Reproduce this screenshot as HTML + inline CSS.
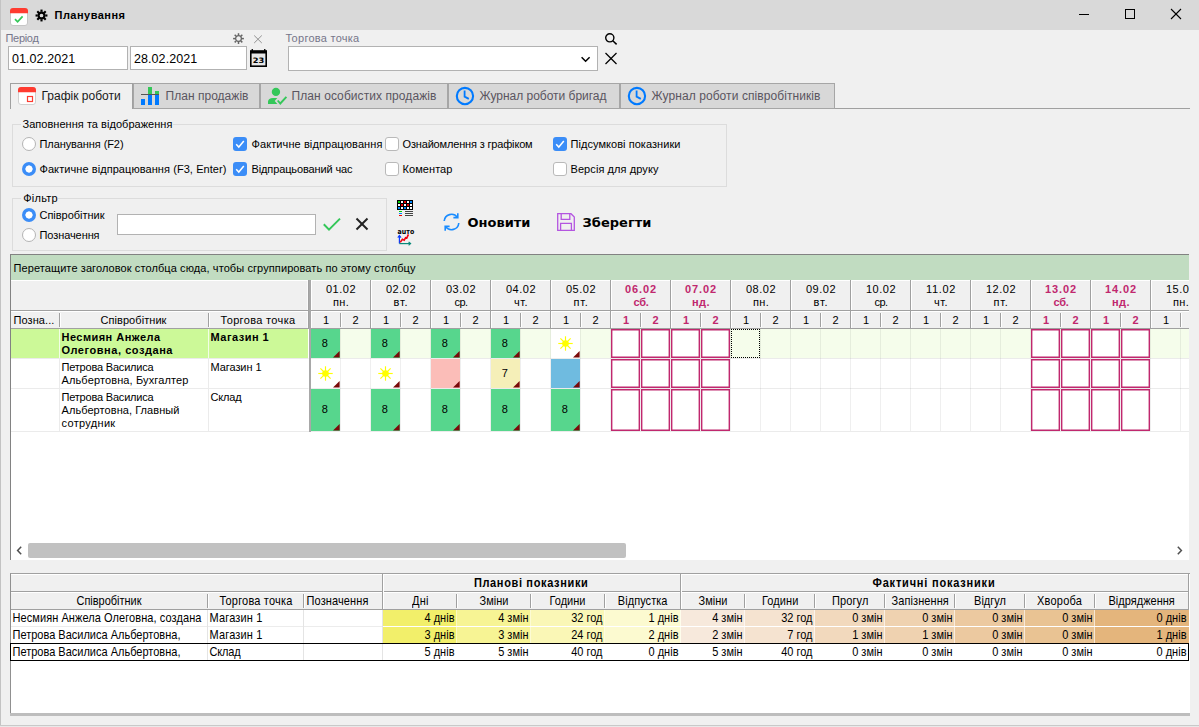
<!DOCTYPE html>
<html lang="uk"><head><meta charset="utf-8"><title>Планування</title>
<style>
html,body{margin:0;padding:0}
body{width:1199px;height:727px;overflow:hidden;position:relative;background:#f0f0f0;font-family:"Liberation Sans",sans-serif;font-size:11px;color:#000}
div,span.t,svg{position:absolute;box-sizing:border-box}
span.t{white-space:pre;display:block}
.inp{background:#fff;border:1px solid #b2b2b2}
.gb{border:1px solid #dcdcdc}
.tab{background:#d8d8d8;border:1px solid #a6a6a6}
.rad{border-radius:50%;background:#fff;border:1px solid #b4b4b4}
.rad.on{border:none;background:radial-gradient(circle at 50% 50%,#fff 0,#fff 3.3px,#3b8df7 3.9px,#3b8df7 100%)}
.cb{border-radius:3px;background:#fff;border:1px solid #b9b9b9}
.cb.on{background:#3b8df7;border:none}

</style></head>
<body>
<div style="left:0px;top:0px;width:1199px;height:30px;background:#d9d9d9"></div>
<div style="left:0px;top:0px;width:1px;height:727px;background:#c3c3c3"></div>
<svg style="left:9px;top:7px" width="20" height="20" viewBox="0 0 20 20">
<rect x="1.5" y="1.5" width="17" height="17" rx="2.5" fill="#fff" stroke="#c6c6c6" stroke-width="1"/>
<path d="M1 4 a3 3 0 0 1 3-3 h12 a3 3 0 0 1 3 3 v2.2 h-18z" fill="#ff3b30"/>
<path d="M6 12.2 l2.6 2.6 l5-5.4" fill="none" stroke="#34c759" stroke-width="1.7"/>
</svg>
<svg style="left:34.5px;top:9.2px" width="13" height="13" viewBox="0 0 14 14">
<g fill="none" stroke="#000" stroke-width="2.2"><circle cx="7" cy="7" r="3.1"/></g>
<g stroke="#000" stroke-width="2.3" stroke-linecap="butt">
<line x1="7" y1="0.6" x2="7" y2="3"/><line x1="7" y1="11" x2="7" y2="13.4"/>
<line x1="0.6" y1="7" x2="3" y2="7"/><line x1="11" y1="7" x2="13.4" y2="7"/>
<line x1="2.5" y1="2.5" x2="4.2" y2="4.2"/><line x1="9.8" y1="9.8" x2="11.5" y2="11.5"/>
<line x1="2.5" y1="11.5" x2="4.2" y2="9.8"/><line x1="9.8" y1="4.2" x2="11.5" y2="2.5"/>
</g></svg>
<span class="t" style="left:54.50px;top:8.84px;font:bold 11px/13px 'Liberation Sans',sans-serif;color:#000;letter-spacing:0.478px;">Планування</span>
<svg style="left:1070px;top:0px" width="129" height="30" viewBox="0 0 129 30">
<g stroke="#000" stroke-width="1" fill="none" shape-rendering="crispEdges">
<line x1="9" y1="14.5" x2="19" y2="14.5"/>
<rect x="55.5" y="9.5" width="9" height="9"/>
</g>
<g stroke="#000" stroke-width="1.1" fill="none">
<line x1="101" y1="9" x2="111" y2="19"/><line x1="111" y1="9" x2="101" y2="19"/>
</g></svg>
<span class="t" style="left:5.50px;top:31.84px;font:normal 11px/13px 'Liberation Sans',sans-serif;color:#76768a;letter-spacing:-0.315px;">Період</span>
<div class="inp" style="left:8px;top:46px;width:120px;height:24px;"></div>
<div class="inp" style="left:130px;top:46px;width:117px;height:24px;"></div>
<span class="t" style="left:12.00px;top:51.97px;font:normal 12.5px/14.5px 'Liberation Sans',sans-serif;color:#000;letter-spacing:0.074px;">01.02.2021</span>
<span class="t" style="left:133.90px;top:51.97px;font:normal 12.5px/14.5px 'Liberation Sans',sans-serif;color:#000;letter-spacing:0.094px;">28.02.2021</span>
<svg style="left:232px;top:32px" width="13" height="13" viewBox="0 0 13 13">
<circle cx="6.5" cy="6.6" r="2.9" fill="none" stroke="#666" stroke-width="1.3"/>
<g stroke="#666" stroke-width="1.5">
<line x1="6.5" y1="1.2" x2="6.5" y2="3.2"/><line x1="6.5" y1="10" x2="6.5" y2="12"/>
<line x1="1.1" y1="6.6" x2="3.1" y2="6.6"/><line x1="9.9" y1="6.6" x2="11.9" y2="6.6"/>
<line x1="2.7" y1="2.8" x2="4.1" y2="4.2"/><line x1="8.9" y1="9" x2="10.3" y2="10.4"/>
<line x1="2.7" y1="10.4" x2="4.1" y2="9"/><line x1="8.9" y1="4.2" x2="10.3" y2="2.8"/>
</g></svg>
<svg style="left:253px;top:34px" width="10" height="10" viewBox="0 0 10 10">
<g stroke="#909090" stroke-width="1"><line x1="1.2" y1="1.5" x2="8.8" y2="9"/><line x1="8.8" y1="1.5" x2="1.2" y2="9"/></g></svg>
<svg style="left:249px;top:48px" width="19" height="20" viewBox="0 0 19 20">
<rect x="1.8" y="3.8" width="15.4" height="14.4" fill="#e6e6e6" stroke="#000" stroke-width="1.6"/>
<rect x="1" y="2.2" width="17" height="3.3" fill="#000"/>
<rect x="2.6" y="1" width="1.3" height="2" fill="#000"/><rect x="15.1" y="1" width="1.3" height="2" fill="#000"/>
<text x="9.5" y="15.2" font-family="DejaVu Sans,sans-serif" font-weight="bold" font-size="7.4" text-anchor="middle" fill="#000" textLength="11.5" lengthAdjust="spacingAndGlyphs">23</text>
</svg>
<span class="t" style="left:285.50px;top:31.84px;font:normal 11px/13px 'Liberation Sans',sans-serif;color:#76768a;letter-spacing:0.263px;">Торгова точка</span>
<div class="inp" style="left:288px;top:46px;width:310px;height:25px;"></div>
<svg style="left:580px;top:55px" width="12" height="9" viewBox="0 0 12 9">
<path d="M1.6 2.2 L5.6 6.2 L9.6 2.2" fill="none" stroke="#000" stroke-width="1.5"/></svg>
<svg style="left:604px;top:32px" width="14" height="14" viewBox="0 0 14 14">
<circle cx="5.8" cy="5.8" r="4.1" fill="none" stroke="#000" stroke-width="1.4"/>
<line x1="8.8" y1="8.8" x2="12.6" y2="12.4" stroke="#000" stroke-width="1.5"/></svg>
<svg style="left:604px;top:52px" width="14" height="13" viewBox="0 0 14 13">
<g stroke="#000" stroke-width="1.3"><line x1="1.5" y1="1" x2="12.5" y2="12"/><line x1="12.5" y1="1" x2="1.5" y2="12"/></g></svg>
<div style="left:10px;top:108px;width:1180px;height:1px;background:#a0a0a0"></div>
<div style="left:10px;top:83px;width:123px;height:26px;background:#f0f0f0;border:1px solid #a0a0a0;border-bottom:none"></div>
<div class="tab" style="left:133px;top:83px;width:127px;height:26px;"></div>
<div class="tab" style="left:260px;top:83px;width:188px;height:26px;"></div>
<div class="tab" style="left:448px;top:83px;width:172px;height:26px;"></div>
<div class="tab" style="left:620px;top:83px;width:215px;height:26px;"></div>
<span class="t" style="left:41.50px;top:88.99px;font:normal 12px/14px 'Liberation Sans',sans-serif;color:#1a1a1a;">Графік роботи</span>
<span class="t" style="left:165.50px;top:88.99px;font:normal 12px/14px 'Liberation Sans',sans-serif;color:#5a5560;letter-spacing:0.031px;">План продажів</span>
<span class="t" style="left:291.50px;top:88.99px;font:normal 12px/14px 'Liberation Sans',sans-serif;color:#5a5560;letter-spacing:0.079px;">План особистих продажів</span>
<span class="t" style="left:479.50px;top:88.99px;font:normal 12px/14px 'Liberation Sans',sans-serif;color:#5a5560;letter-spacing:-0.016px;">Журнал роботи бригад</span>
<span class="t" style="left:651.50px;top:88.99px;font:normal 12px/14px 'Liberation Sans',sans-serif;color:#5a5560;letter-spacing:0.078px;">Журнал роботи співробітників</span>
<svg style="left:17px;top:86px" width="20" height="20" viewBox="0 0 20 20">
<rect x="1.5" y="1.5" width="17" height="17" rx="2.5" fill="#fff" stroke="#d0d0d0"/>
<path d="M1 4 a3 3 0 0 1 3-3 h12 a3 3 0 0 1 3 3 v2.2 h-18z" fill="#ff3b30"/>
<rect x="10.5" y="10.5" width="5" height="5" fill="none" stroke="#ff3b30" stroke-width="1.2"/>
</svg>
<svg style="left:140px;top:86px" width="20" height="20" viewBox="0 0 20 20">
<rect x="1" y="13" width="4" height="6" fill="#007aff"/><rect x="8" y="8.6" width="4" height="10.4" fill="#007aff"/><rect x="15" y="8.6" width="4" height="10.4" fill="#007aff"/>
<rect x="8" y="1" width="4" height="7.4" fill="#34c759"/><rect x="15" y="5" width="4" height="3.4" fill="#34c759"/>
<rect x="1" y="8" width="18" height="1" fill="#555"/>
</svg>
<svg style="left:267px;top:86px" width="21" height="20" viewBox="0 0 21 20">
<circle cx="8.95" cy="5.9" r="4.2" fill="#34c759"/>
<path d="M1 18 V15.6 Q1.4 12 6 12 H10.3 L7.7 15 L10.4 18 Z" fill="#34c759"/>
<path d="M10.7 14.5 L13.3 17.5 L19.4 10.9" fill="none" stroke="#34c759" stroke-width="1.9"/>
</svg>
<svg style="left:455px;top:86px" width="20" height="20" viewBox="0 0 20 20">
<circle cx="9.95" cy="10.05" r="8.15" fill="none" stroke="#007aff" stroke-width="2.1"/>
<path d="M9.6 4.6 v6 l4.2 2.3" fill="none" stroke="#007aff" stroke-width="1.8"/></svg>
<svg style="left:627px;top:86px" width="20" height="20" viewBox="0 0 20 20">
<circle cx="9.95" cy="10.05" r="8.15" fill="none" stroke="#007aff" stroke-width="2.1"/>
<path d="M9.6 4.6 v6 l4.2 2.3" fill="none" stroke="#007aff" stroke-width="1.8"/></svg>
<div class="gb" style="left:12px;top:124px;width:715px;height:63px;"></div>
<div style="left:21px;top:118px;width:152px;height:13px;background:#f0f0f0"></div>
<span class="t" style="left:22.50px;top:117.84px;font:normal 11px/13px 'Liberation Sans',sans-serif;color:#000;letter-spacing:0.035px;">Заповнення та відображення</span>
<div class="rad" style="left:22px;top:137px;width:14px;height:14px;"></div>
<span class="t" style="left:39.50px;top:137.84px;font:normal 11px/13px 'Liberation Sans',sans-serif;color:#000;letter-spacing:-0.079px;">Планування (F2)</span>
<div class="rad on" style="left:22px;top:162px;width:14px;height:14px;"></div>
<span class="t" style="left:39.50px;top:162.84px;font:normal 11px/13px 'Liberation Sans',sans-serif;color:#000;letter-spacing:0.071px;">Фактичне відпрацювання (F3, Enter)</span>
<div class="cb on" style="left:233px;top:137px;width:14px;height:14px;"><svg style="left:0;top:0" width="14" height="14" viewBox="0 0 14 14"><path d="M3.2 7.2 l2.6 2.8 l5-6" fill="none" stroke="#fff" stroke-width="1.5"/></svg></div>
<span class="t" style="left:251.50px;top:137.84px;font:normal 11px/13px 'Liberation Sans',sans-serif;color:#000;letter-spacing:0.092px;">Фактичне відпрацювання</span>
<div class="cb on" style="left:233px;top:162px;width:14px;height:14px;"><svg style="left:0;top:0" width="14" height="14" viewBox="0 0 14 14"><path d="M3.2 7.2 l2.6 2.8 l5-6" fill="none" stroke="#fff" stroke-width="1.5"/></svg></div>
<span class="t" style="left:251.50px;top:162.84px;font:normal 11px/13px 'Liberation Sans',sans-serif;color:#000;letter-spacing:-0.120px;">Відпрацьований час</span>
<div class="cb" style="left:385px;top:137px;width:14px;height:14px;"></div>
<span class="t" style="left:402.50px;top:137.84px;font:normal 11px/13px 'Liberation Sans',sans-serif;color:#000;letter-spacing:-0.164px;">Ознайомлення з графіком</span>
<div class="cb" style="left:385px;top:162px;width:14px;height:14px;"></div>
<span class="t" style="left:402.50px;top:162.84px;font:normal 11px/13px 'Liberation Sans',sans-serif;color:#000;letter-spacing:0.070px;">Коментар</span>
<div class="cb on" style="left:553px;top:137px;width:14px;height:14px;"><svg style="left:0;top:0" width="14" height="14" viewBox="0 0 14 14"><path d="M3.2 7.2 l2.6 2.8 l5-6" fill="none" stroke="#fff" stroke-width="1.5"/></svg></div>
<span class="t" style="left:570.50px;top:137.84px;font:normal 11px/13px 'Liberation Sans',sans-serif;color:#000;letter-spacing:0.052px;">Підсумкові показники</span>
<div class="cb" style="left:553px;top:162px;width:14px;height:14px;"></div>
<span class="t" style="left:570.50px;top:162.84px;font:normal 11px/13px 'Liberation Sans',sans-serif;color:#000;letter-spacing:0.079px;">Версія для друку</span>
<div class="gb" style="left:12px;top:198px;width:375px;height:53px;"></div>
<div style="left:21px;top:193px;width:37px;height:12px;background:#f0f0f0"></div>
<span class="t" style="left:23.20px;top:191.84px;font:normal 11px/13px 'Liberation Sans',sans-serif;color:#000;letter-spacing:0.256px;">Фільтр</span>
<div class="rad on" style="left:22px;top:208px;width:14px;height:14px;"></div>
<span class="t" style="left:39.50px;top:208.84px;font:normal 11px/13px 'Liberation Sans',sans-serif;color:#000;letter-spacing:-0.021px;">Співробітник</span>
<div class="rad" style="left:22px;top:228px;width:14px;height:14px;"></div>
<span class="t" style="left:39.50px;top:228.84px;font:normal 11px/13px 'Liberation Sans',sans-serif;color:#000;letter-spacing:-0.086px;">Позначення</span>
<div class="inp" style="left:117px;top:214px;width:199px;height:21px;"></div>
<svg style="left:322px;top:216px" width="20" height="16" viewBox="0 0 20 16">
<path d="M1.8 8.2 l5.2 5.4 L18 2.6" fill="none" stroke="#34c759" stroke-width="2"/></svg>
<svg style="left:355px;top:217px" width="14" height="14" viewBox="0 0 14 14">
<g stroke="#222" stroke-width="2"><line x1="1.5" y1="1.5" x2="12.5" y2="12.5"/><line x1="12.5" y1="1.5" x2="1.5" y2="12.5"/></g></svg>
<svg style="left:397px;top:200px" width="17" height="17" viewBox="0 0 17 17" shape-rendering="crispEdges"><rect x="0" y="0" width="16" height="10" fill="#000"/><rect x="1" y="1" width="2" height="2" fill="#0c0"/><rect x="4" y="1" width="2" height="2" fill="#fff"/><rect x="7" y="1" width="2" height="2" fill="#e00"/><rect x="10" y="1" width="2" height="2" fill="#fff"/><rect x="13" y="1" width="2" height="2" fill="#08f"/><rect x="1" y="4" width="2" height="2" fill="#fff"/><rect x="4" y="4" width="2" height="2" fill="#e00"/><rect x="7" y="4" width="2" height="2" fill="#fff"/><rect x="10" y="4" width="2" height="2" fill="#e00"/><rect x="13" y="4" width="2" height="2" fill="#fff"/><rect x="1" y="7" width="2" height="2" fill="#08f"/><rect x="4" y="7" width="2" height="2" fill="#fff"/><rect x="7" y="7" width="2" height="2" fill="#08f"/><rect x="10" y="7" width="2" height="2" fill="#fff"/><rect x="13" y="7" width="2" height="2" fill="#fff"/><rect x="2" y="11" width="3" height="1" fill="#0c0"/><rect x="2" y="13" width="3" height="1" fill="#08f"/><rect x="2" y="15" width="3" height="1" fill="#e00"/><rect x="8" y="11" width="8" height="1" fill="#444"/><rect x="8" y="13" width="8" height="1" fill="#444"/><rect x="8" y="15" width="8" height="1" fill="#444"/></svg>
<svg style="left:396px;top:228px" width="20" height="18" viewBox="0 0 20 18">
<text x="1.6" y="5.7" font-family="DejaVu Sans,sans-serif" font-weight="bold" font-size="7.2" fill="#000" textLength="16.6" lengthAdjust="spacingAndGlyphs">auто</text>
<path d="M3.4 8 V15.6" fill="none" stroke="#0a3cff" stroke-width="1.2"/>
<path d="M1.8 9.6 L3.4 7.4 L5 9.6" fill="none" stroke="#0a3cff" stroke-width="1.1"/>
<path d="M3.4 15.6 H14" stroke="#0a8a7a" stroke-width="1.2"/>
<path d="M12.6 14 L14.6 15.6 L12.6 17.2" fill="none" stroke="#0a8a7a" stroke-width="1.1"/>
<path d="M4.2 14.4 l2.2 -3.2 l1.8 1 l1.4 -2.6 l1.2 0.4 l1.6 -3.6" fill="none" stroke="#f00010" stroke-width="1.6"/>
</svg>
<svg style="left:442px;top:212px" width="19" height="20" viewBox="0 0 19 20">
<g fill="none" stroke="#1a8cff" stroke-width="1.6">
<path d="M2.2 9 a7.3 7.3 0 0 1 13.2 -3.6"/><path d="M16.8 11 a7.3 7.3 0 0 1 -13.2 3.6"/>
<path d="M11.4 5.6 h4.4 v-4.4"/><path d="M7.6 14.4 h-4.4 v4.4"/></g></svg>
<span class="t" style="left:467.50px;top:215.15px;font:bold 13px/15px 'DejaVu Sans',sans-serif;color:#000;">Оновити</span>
<svg style="left:556px;top:212px" width="20" height="20" viewBox="0 0 20 20">
<g fill="none" stroke="#b455e0" stroke-width="1.3">
<path d="M1.7 1.7 h13.3 l3.3 3.3 v13.3 h-16.6z"/><path d="M5.2 1.7 v5.6 h8.6 v-5.6"/><path d="M4.6 18.3 v-7 h10.8 v7"/></g></svg>
<span class="t" style="left:582.50px;top:215.15px;font:bold 13px/15px 'DejaVu Sans',sans-serif;color:#000;letter-spacing:0.037px;">Зберегти</span>
<div style="left:10px;top:254px;width:1179px;height:306px;background:#fff;border-top:1px solid #828282;border-left:1px solid #828282"></div>
<div style="left:11px;top:255px;width:1178px;height:25px;background:#c1dcc1"></div>
<span class="t" style="left:13.50px;top:261.84px;font:normal 11px/13px 'Liberation Sans',sans-serif;color:#000;letter-spacing:0.094px;">Перетащите заголовок столбца сюда, чтобы сгруппировать по этому столбцу</span>
<div style="left:11px;top:280px;width:1178px;height:49px;background:#f0f0f0;border-top:1px solid #fff"></div>
<div style="left:11px;top:310px;width:1178px;height:1px;background:#a0a0a0"></div>
<div style="left:11px;top:311px;width:1178px;height:1px;background:#fff"></div>
<div style="left:11px;top:328px;width:1178px;height:1px;background:#a0a0a0"></div>
<div style="left:59px;top:313px;width:1px;height:14px;background:#a0a0a0"></div>
<div style="left:60px;top:313px;width:1px;height:14px;background:#fff"></div>
<div style="left:208px;top:313px;width:1px;height:14px;background:#a0a0a0"></div>
<div style="left:209px;top:313px;width:1px;height:14px;background:#fff"></div>
<span class="t" style="left:13.50px;top:313.84px;font:normal 11px/13px 'Liberation Sans',sans-serif;color:#000;letter-spacing:0.086px;">Позна...</span>
<span class="t" style="left:100.50px;top:313.84px;font:normal 11px/13px 'Liberation Sans',sans-serif;color:#000;letter-spacing:0.062px;">Співробітник</span>
<span class="t" style="left:220.50px;top:313.84px;font:normal 11px/13px 'Liberation Sans',sans-serif;color:#000;letter-spacing:0.340px;">Торгова точка</span>
<div style="left:0px;top:0px;width:1189px;height:727px;overflow:hidden"><div style="left:370px;top:280px;width:1px;height:49px;background:#a0a0a0"></div><div style="left:371px;top:281px;width:1px;height:29px;background:#fff"></div><div style="left:371px;top:312px;width:1px;height:16px;background:#fff"></div><div style="left:340px;top:313px;width:1px;height:14px;background:#a0a0a0"></div><div style="left:341px;top:313px;width:1px;height:14px;background:#fff"></div><span class="t" style="left:326.00px;top:282.84px;font:normal 11px/13px 'Liberation Sans',sans-serif;color:#000;letter-spacing:0.494px;">01.02</span><span class="t" style="left:333.00px;top:295.84px;font:normal 11px/13px 'Liberation Sans',sans-serif;color:#000;letter-spacing:0.302px;">пн.</span><span class="t" style="left:323.00px;top:313.84px;font:normal 11px/13px 'Liberation Sans',sans-serif;color:#000;">1</span><span class="t" style="left:352.50px;top:313.84px;font:normal 11px/13px 'Liberation Sans',sans-serif;color:#000;">2</span><div style="left:430px;top:280px;width:1px;height:49px;background:#a0a0a0"></div><div style="left:431px;top:281px;width:1px;height:29px;background:#fff"></div><div style="left:431px;top:312px;width:1px;height:16px;background:#fff"></div><div style="left:400px;top:313px;width:1px;height:14px;background:#a0a0a0"></div><div style="left:401px;top:313px;width:1px;height:14px;background:#fff"></div><span class="t" style="left:386.00px;top:282.84px;font:normal 11px/13px 'Liberation Sans',sans-serif;color:#000;letter-spacing:0.494px;">02.02</span><span class="t" style="left:393.50px;top:295.84px;font:normal 11px/13px 'Liberation Sans',sans-serif;color:#000;letter-spacing:0.839px;">вт.</span><span class="t" style="left:383.00px;top:313.84px;font:normal 11px/13px 'Liberation Sans',sans-serif;color:#000;">1</span><span class="t" style="left:412.50px;top:313.84px;font:normal 11px/13px 'Liberation Sans',sans-serif;color:#000;">2</span><div style="left:490px;top:280px;width:1px;height:49px;background:#a0a0a0"></div><div style="left:491px;top:281px;width:1px;height:29px;background:#fff"></div><div style="left:491px;top:312px;width:1px;height:16px;background:#fff"></div><div style="left:460px;top:313px;width:1px;height:14px;background:#a0a0a0"></div><div style="left:461px;top:313px;width:1px;height:14px;background:#fff"></div><span class="t" style="left:446.00px;top:282.84px;font:normal 11px/13px 'Liberation Sans',sans-serif;color:#000;letter-spacing:0.494px;">03.02</span><span class="t" style="left:454.50px;top:295.84px;font:normal 11px/13px 'Liberation Sans',sans-serif;color:#000;letter-spacing:-0.562px;">ср.</span><span class="t" style="left:443.00px;top:313.84px;font:normal 11px/13px 'Liberation Sans',sans-serif;color:#000;">1</span><span class="t" style="left:472.50px;top:313.84px;font:normal 11px/13px 'Liberation Sans',sans-serif;color:#000;">2</span><div style="left:550px;top:280px;width:1px;height:49px;background:#a0a0a0"></div><div style="left:551px;top:281px;width:1px;height:29px;background:#fff"></div><div style="left:551px;top:312px;width:1px;height:16px;background:#fff"></div><div style="left:520px;top:313px;width:1px;height:14px;background:#a0a0a0"></div><div style="left:521px;top:313px;width:1px;height:14px;background:#fff"></div><span class="t" style="left:506.00px;top:282.84px;font:normal 11px/13px 'Liberation Sans',sans-serif;color:#000;letter-spacing:0.494px;">04.02</span><span class="t" style="left:514.00px;top:295.84px;font:normal 11px/13px 'Liberation Sans',sans-serif;color:#000;letter-spacing:0.464px;">чт.</span><span class="t" style="left:503.00px;top:313.84px;font:normal 11px/13px 'Liberation Sans',sans-serif;color:#000;">1</span><span class="t" style="left:532.50px;top:313.84px;font:normal 11px/13px 'Liberation Sans',sans-serif;color:#000;">2</span><div style="left:610px;top:280px;width:1px;height:49px;background:#a0a0a0"></div><div style="left:611px;top:281px;width:1px;height:29px;background:#fff"></div><div style="left:611px;top:312px;width:1px;height:16px;background:#fff"></div><div style="left:580px;top:313px;width:1px;height:14px;background:#a0a0a0"></div><div style="left:581px;top:313px;width:1px;height:14px;background:#fff"></div><span class="t" style="left:566.00px;top:282.84px;font:normal 11px/13px 'Liberation Sans',sans-serif;color:#000;letter-spacing:0.494px;">05.02</span><span class="t" style="left:573.50px;top:295.84px;font:normal 11px/13px 'Liberation Sans',sans-serif;color:#000;letter-spacing:0.719px;">пт.</span><span class="t" style="left:563.00px;top:313.84px;font:normal 11px/13px 'Liberation Sans',sans-serif;color:#000;">1</span><span class="t" style="left:592.50px;top:313.84px;font:normal 11px/13px 'Liberation Sans',sans-serif;color:#000;">2</span><div style="left:670px;top:280px;width:1px;height:49px;background:#a0a0a0"></div><div style="left:671px;top:281px;width:1px;height:29px;background:#fff"></div><div style="left:671px;top:312px;width:1px;height:16px;background:#fff"></div><div style="left:640px;top:313px;width:1px;height:14px;background:#a0a0a0"></div><div style="left:641px;top:313px;width:1px;height:14px;background:#fff"></div><span class="t" style="left:625.00px;top:282.84px;font:bold 11px/13px 'Liberation Sans',sans-serif;color:#c0286e;letter-spacing:0.894px;">06.02</span><span class="t" style="left:633.50px;top:295.84px;font:bold 11px/13px 'Liberation Sans',sans-serif;color:#c0286e;letter-spacing:-0.276px;">сб.</span><span class="t" style="left:623.00px;top:313.84px;font:bold 11px/13px 'Liberation Sans',sans-serif;color:#c0286e;">1</span><span class="t" style="left:652.50px;top:313.84px;font:bold 11px/13px 'Liberation Sans',sans-serif;color:#c0286e;">2</span><div style="left:730px;top:280px;width:1px;height:49px;background:#a0a0a0"></div><div style="left:731px;top:281px;width:1px;height:29px;background:#fff"></div><div style="left:731px;top:312px;width:1px;height:16px;background:#fff"></div><div style="left:700px;top:313px;width:1px;height:14px;background:#a0a0a0"></div><div style="left:701px;top:313px;width:1px;height:14px;background:#fff"></div><span class="t" style="left:685.00px;top:282.84px;font:bold 11px/13px 'Liberation Sans',sans-serif;color:#c0286e;letter-spacing:0.894px;">07.02</span><span class="t" style="left:692.00px;top:295.84px;font:bold 11px/13px 'Liberation Sans',sans-serif;color:#c0286e;letter-spacing:0.438px;">нд.</span><span class="t" style="left:683.00px;top:313.84px;font:bold 11px/13px 'Liberation Sans',sans-serif;color:#c0286e;">1</span><span class="t" style="left:712.50px;top:313.84px;font:bold 11px/13px 'Liberation Sans',sans-serif;color:#c0286e;">2</span><div style="left:790px;top:280px;width:1px;height:49px;background:#a0a0a0"></div><div style="left:791px;top:281px;width:1px;height:29px;background:#fff"></div><div style="left:791px;top:312px;width:1px;height:16px;background:#fff"></div><div style="left:760px;top:313px;width:1px;height:14px;background:#a0a0a0"></div><div style="left:761px;top:313px;width:1px;height:14px;background:#fff"></div><span class="t" style="left:746.00px;top:282.84px;font:normal 11px/13px 'Liberation Sans',sans-serif;color:#000;letter-spacing:0.494px;">08.02</span><span class="t" style="left:753.00px;top:295.84px;font:normal 11px/13px 'Liberation Sans',sans-serif;color:#000;letter-spacing:0.302px;">пн.</span><span class="t" style="left:743.00px;top:313.84px;font:normal 11px/13px 'Liberation Sans',sans-serif;color:#000;">1</span><span class="t" style="left:772.50px;top:313.84px;font:normal 11px/13px 'Liberation Sans',sans-serif;color:#000;">2</span><div style="left:850px;top:280px;width:1px;height:49px;background:#a0a0a0"></div><div style="left:851px;top:281px;width:1px;height:29px;background:#fff"></div><div style="left:851px;top:312px;width:1px;height:16px;background:#fff"></div><div style="left:820px;top:313px;width:1px;height:14px;background:#a0a0a0"></div><div style="left:821px;top:313px;width:1px;height:14px;background:#fff"></div><span class="t" style="left:806.00px;top:282.84px;font:normal 11px/13px 'Liberation Sans',sans-serif;color:#000;letter-spacing:0.494px;">09.02</span><span class="t" style="left:813.50px;top:295.84px;font:normal 11px/13px 'Liberation Sans',sans-serif;color:#000;letter-spacing:0.839px;">вт.</span><span class="t" style="left:803.00px;top:313.84px;font:normal 11px/13px 'Liberation Sans',sans-serif;color:#000;">1</span><span class="t" style="left:832.50px;top:313.84px;font:normal 11px/13px 'Liberation Sans',sans-serif;color:#000;">2</span><div style="left:910px;top:280px;width:1px;height:49px;background:#a0a0a0"></div><div style="left:911px;top:281px;width:1px;height:29px;background:#fff"></div><div style="left:911px;top:312px;width:1px;height:16px;background:#fff"></div><div style="left:880px;top:313px;width:1px;height:14px;background:#a0a0a0"></div><div style="left:881px;top:313px;width:1px;height:14px;background:#fff"></div><span class="t" style="left:866.00px;top:282.84px;font:normal 11px/13px 'Liberation Sans',sans-serif;color:#000;letter-spacing:0.494px;">10.02</span><span class="t" style="left:874.50px;top:295.84px;font:normal 11px/13px 'Liberation Sans',sans-serif;color:#000;letter-spacing:-0.562px;">ср.</span><span class="t" style="left:863.00px;top:313.84px;font:normal 11px/13px 'Liberation Sans',sans-serif;color:#000;">1</span><span class="t" style="left:892.50px;top:313.84px;font:normal 11px/13px 'Liberation Sans',sans-serif;color:#000;">2</span><div style="left:970px;top:280px;width:1px;height:49px;background:#a0a0a0"></div><div style="left:971px;top:281px;width:1px;height:29px;background:#fff"></div><div style="left:971px;top:312px;width:1px;height:16px;background:#fff"></div><div style="left:940px;top:313px;width:1px;height:14px;background:#a0a0a0"></div><div style="left:941px;top:313px;width:1px;height:14px;background:#fff"></div><span class="t" style="left:926.00px;top:282.84px;font:normal 11px/13px 'Liberation Sans',sans-serif;color:#000;letter-spacing:0.656px;">11.02</span><span class="t" style="left:934.00px;top:295.84px;font:normal 11px/13px 'Liberation Sans',sans-serif;color:#000;letter-spacing:0.464px;">чт.</span><span class="t" style="left:923.00px;top:313.84px;font:normal 11px/13px 'Liberation Sans',sans-serif;color:#000;">1</span><span class="t" style="left:952.50px;top:313.84px;font:normal 11px/13px 'Liberation Sans',sans-serif;color:#000;">2</span><div style="left:1030px;top:280px;width:1px;height:49px;background:#a0a0a0"></div><div style="left:1031px;top:281px;width:1px;height:29px;background:#fff"></div><div style="left:1031px;top:312px;width:1px;height:16px;background:#fff"></div><div style="left:1000px;top:313px;width:1px;height:14px;background:#a0a0a0"></div><div style="left:1001px;top:313px;width:1px;height:14px;background:#fff"></div><span class="t" style="left:986.00px;top:282.84px;font:normal 11px/13px 'Liberation Sans',sans-serif;color:#000;letter-spacing:0.494px;">12.02</span><span class="t" style="left:993.50px;top:295.84px;font:normal 11px/13px 'Liberation Sans',sans-serif;color:#000;letter-spacing:0.719px;">пт.</span><span class="t" style="left:983.00px;top:313.84px;font:normal 11px/13px 'Liberation Sans',sans-serif;color:#000;">1</span><span class="t" style="left:1012.50px;top:313.84px;font:normal 11px/13px 'Liberation Sans',sans-serif;color:#000;">2</span><div style="left:1090px;top:280px;width:1px;height:49px;background:#a0a0a0"></div><div style="left:1091px;top:281px;width:1px;height:29px;background:#fff"></div><div style="left:1091px;top:312px;width:1px;height:16px;background:#fff"></div><div style="left:1060px;top:313px;width:1px;height:14px;background:#a0a0a0"></div><div style="left:1061px;top:313px;width:1px;height:14px;background:#fff"></div><span class="t" style="left:1045.00px;top:282.84px;font:bold 11px/13px 'Liberation Sans',sans-serif;color:#c0286e;letter-spacing:0.894px;">13.02</span><span class="t" style="left:1053.50px;top:295.84px;font:bold 11px/13px 'Liberation Sans',sans-serif;color:#c0286e;letter-spacing:-0.276px;">сб.</span><span class="t" style="left:1043.00px;top:313.84px;font:bold 11px/13px 'Liberation Sans',sans-serif;color:#c0286e;">1</span><span class="t" style="left:1072.50px;top:313.84px;font:bold 11px/13px 'Liberation Sans',sans-serif;color:#c0286e;">2</span><div style="left:1150px;top:280px;width:1px;height:49px;background:#a0a0a0"></div><div style="left:1151px;top:281px;width:1px;height:29px;background:#fff"></div><div style="left:1151px;top:312px;width:1px;height:16px;background:#fff"></div><div style="left:1120px;top:313px;width:1px;height:14px;background:#a0a0a0"></div><div style="left:1121px;top:313px;width:1px;height:14px;background:#fff"></div><span class="t" style="left:1105.00px;top:282.84px;font:bold 11px/13px 'Liberation Sans',sans-serif;color:#c0286e;letter-spacing:0.894px;">14.02</span><span class="t" style="left:1112.00px;top:295.84px;font:bold 11px/13px 'Liberation Sans',sans-serif;color:#c0286e;letter-spacing:0.438px;">нд.</span><span class="t" style="left:1103.00px;top:313.84px;font:bold 11px/13px 'Liberation Sans',sans-serif;color:#c0286e;">1</span><span class="t" style="left:1132.50px;top:313.84px;font:bold 11px/13px 'Liberation Sans',sans-serif;color:#c0286e;">2</span><div style="left:1180px;top:313px;width:1px;height:14px;background:#a0a0a0"></div><div style="left:1181px;top:313px;width:1px;height:14px;background:#fff"></div><span class="t" style="left:1166.00px;top:282.84px;font:normal 11px/13px 'Liberation Sans',sans-serif;color:#000;letter-spacing:0.494px;">15.02</span><span class="t" style="left:1173.00px;top:295.84px;font:normal 11px/13px 'Liberation Sans',sans-serif;color:#000;letter-spacing:0.302px;">пн.</span><span class="t" style="left:1163.00px;top:313.84px;font:normal 11px/13px 'Liberation Sans',sans-serif;color:#000;">1</span><span class="t" style="left:1192.50px;top:313.84px;font:normal 11px/13px 'Liberation Sans',sans-serif;color:#000;">2</span></div>
<div style="left:0px;top:0px;width:1189px;height:727px;overflow:hidden"><div style="left:11px;top:329px;width:297px;height:29px;background:#ccf998"></div><div style="left:311px;top:329px;width:878px;height:29px;background:#f5fdeb"></div><div style="left:59px;top:329px;width:1px;height:102px;background:rgba(255,255,255,0.75)"></div><div style="left:59px;top:359px;width:1px;height:72px;background:#ebebeb"></div><div style="left:208px;top:329px;width:1px;height:102px;background:rgba(255,255,255,0.75)"></div><div style="left:208px;top:359px;width:1px;height:72px;background:#ebebeb"></div><div style="left:11px;top:358px;width:1178px;height:1px;background:#ebebeb"></div><div style="left:11px;top:388px;width:1178px;height:1px;background:#ebebeb"></div><div style="left:11px;top:431px;width:1178px;height:1px;background:#ebebeb"></div><div style="left:340px;top:329px;width:1px;height:102px;background:rgba(0,0,0,0.062)"></div><div style="left:370px;top:329px;width:1px;height:102px;background:rgba(0,0,0,0.062)"></div><div style="left:400px;top:329px;width:1px;height:102px;background:rgba(0,0,0,0.062)"></div><div style="left:430px;top:329px;width:1px;height:102px;background:rgba(0,0,0,0.062)"></div><div style="left:460px;top:329px;width:1px;height:102px;background:rgba(0,0,0,0.062)"></div><div style="left:490px;top:329px;width:1px;height:102px;background:rgba(0,0,0,0.062)"></div><div style="left:520px;top:329px;width:1px;height:102px;background:rgba(0,0,0,0.062)"></div><div style="left:550px;top:329px;width:1px;height:102px;background:rgba(0,0,0,0.062)"></div><div style="left:580px;top:329px;width:1px;height:102px;background:rgba(0,0,0,0.062)"></div><div style="left:610px;top:329px;width:1px;height:102px;background:rgba(0,0,0,0.062)"></div><div style="left:640px;top:329px;width:1px;height:102px;background:rgba(0,0,0,0.062)"></div><div style="left:670px;top:329px;width:1px;height:102px;background:rgba(0,0,0,0.062)"></div><div style="left:700px;top:329px;width:1px;height:102px;background:rgba(0,0,0,0.062)"></div><div style="left:730px;top:329px;width:1px;height:102px;background:rgba(0,0,0,0.062)"></div><div style="left:760px;top:329px;width:1px;height:102px;background:rgba(0,0,0,0.062)"></div><div style="left:790px;top:329px;width:1px;height:102px;background:rgba(0,0,0,0.062)"></div><div style="left:820px;top:329px;width:1px;height:102px;background:rgba(0,0,0,0.062)"></div><div style="left:850px;top:329px;width:1px;height:102px;background:rgba(0,0,0,0.062)"></div><div style="left:880px;top:329px;width:1px;height:102px;background:rgba(0,0,0,0.062)"></div><div style="left:910px;top:329px;width:1px;height:102px;background:rgba(0,0,0,0.062)"></div><div style="left:940px;top:329px;width:1px;height:102px;background:rgba(0,0,0,0.062)"></div><div style="left:970px;top:329px;width:1px;height:102px;background:rgba(0,0,0,0.062)"></div><div style="left:1000px;top:329px;width:1px;height:102px;background:rgba(0,0,0,0.062)"></div><div style="left:1030px;top:329px;width:1px;height:102px;background:rgba(0,0,0,0.062)"></div><div style="left:1060px;top:329px;width:1px;height:102px;background:rgba(0,0,0,0.062)"></div><div style="left:1090px;top:329px;width:1px;height:102px;background:rgba(0,0,0,0.062)"></div><div style="left:1120px;top:329px;width:1px;height:102px;background:rgba(0,0,0,0.062)"></div><div style="left:1150px;top:329px;width:1px;height:102px;background:rgba(0,0,0,0.062)"></div><div style="left:1180px;top:329px;width:1px;height:102px;background:rgba(0,0,0,0.062)"></div><div style="left:308px;top:329px;width:1px;height:102px;background:rgba(255,255,255,0.5)"></div><div style="left:309px;top:280px;width:2px;height:152px;background:#a8a8a8"></div><div style="left:308px;top:280px;width:1px;height:49px;background:#a0a0a0"></div><div style="left:307px;top:281px;width:1px;height:29px;background:#fafafa"></div><div style="left:307px;top:312px;width:1px;height:16px;background:#fafafa"></div><div style="left:311px;top:281px;width:1px;height:29px;background:#fff"></div><div style="left:311px;top:312px;width:1px;height:16px;background:#fff"></div><div style="left:311px;top:329px;width:29px;height:29px;background:#57d68d"></div><svg style="left:333.4px;top:351.4px" width="6.6" height="6.6" viewBox="0 0 7 7"><path d="M7 0 V7 H0z" fill="#7a0a0a"/></svg><span class="t" style="left:321.80px;top:336.84px;font:normal 11px/13px 'Liberation Sans',sans-serif;color:#000;">8</span><div style="left:371px;top:329px;width:29px;height:29px;background:#57d68d"></div><svg style="left:393.4px;top:351.4px" width="6.6" height="6.6" viewBox="0 0 7 7"><path d="M7 0 V7 H0z" fill="#7a0a0a"/></svg><span class="t" style="left:381.80px;top:336.84px;font:normal 11px/13px 'Liberation Sans',sans-serif;color:#000;">8</span><div style="left:431px;top:329px;width:29px;height:29px;background:#57d68d"></div><svg style="left:453.4px;top:351.4px" width="6.6" height="6.6" viewBox="0 0 7 7"><path d="M7 0 V7 H0z" fill="#7a0a0a"/></svg><span class="t" style="left:441.80px;top:336.84px;font:normal 11px/13px 'Liberation Sans',sans-serif;color:#000;">8</span><div style="left:491px;top:329px;width:29px;height:29px;background:#57d68d"></div><svg style="left:513.4px;top:351.4px" width="6.6" height="6.6" viewBox="0 0 7 7"><path d="M7 0 V7 H0z" fill="#7a0a0a"/></svg><span class="t" style="left:501.80px;top:336.84px;font:normal 11px/13px 'Liberation Sans',sans-serif;color:#000;">8</span><div style="left:551px;top:329px;width:29px;height:29px;background:#fff"></div><svg style="left:551px;top:329px" width="29" height="29" viewBox="0 0 29 29"><g transform="translate(14.5 14.5)" stroke="#ffff00" stroke-width="1.15"><line x1="0" y1="-7.2" x2="0" y2="7.2" transform="rotate(0)"/><line x1="0" y1="-7.2" x2="0" y2="7.2" transform="rotate(45)"/><line x1="0" y1="-7.2" x2="0" y2="7.2" transform="rotate(90)"/><line x1="0" y1="-7.2" x2="0" y2="7.2" transform="rotate(135)"/><circle r="3.3" fill="#ffff00" stroke="none"/></g></svg><svg style="left:573.4px;top:351.4px" width="6.6" height="6.6" viewBox="0 0 7 7"><path d="M7 0 V7 H0z" fill="#7a0a0a"/></svg><div style="left:311px;top:359px;width:29px;height:29px;background:#fff"></div><svg style="left:311px;top:359px" width="29" height="29" viewBox="0 0 29 29"><g transform="translate(14.5 14.5)" stroke="#ffff00" stroke-width="1.15"><line x1="0" y1="-7.2" x2="0" y2="7.2" transform="rotate(0)"/><line x1="0" y1="-7.2" x2="0" y2="7.2" transform="rotate(45)"/><line x1="0" y1="-7.2" x2="0" y2="7.2" transform="rotate(90)"/><line x1="0" y1="-7.2" x2="0" y2="7.2" transform="rotate(135)"/><circle r="3.3" fill="#ffff00" stroke="none"/></g></svg><svg style="left:333.4px;top:381.4px" width="6.6" height="6.6" viewBox="0 0 7 7"><path d="M7 0 V7 H0z" fill="#7a0a0a"/></svg><div style="left:371px;top:359px;width:29px;height:29px;background:#fff"></div><svg style="left:371px;top:359px" width="29" height="29" viewBox="0 0 29 29"><g transform="translate(14.5 14.5)" stroke="#ffff00" stroke-width="1.15"><line x1="0" y1="-7.2" x2="0" y2="7.2" transform="rotate(0)"/><line x1="0" y1="-7.2" x2="0" y2="7.2" transform="rotate(45)"/><line x1="0" y1="-7.2" x2="0" y2="7.2" transform="rotate(90)"/><line x1="0" y1="-7.2" x2="0" y2="7.2" transform="rotate(135)"/><circle r="3.3" fill="#ffff00" stroke="none"/></g></svg><svg style="left:393.4px;top:381.4px" width="6.6" height="6.6" viewBox="0 0 7 7"><path d="M7 0 V7 H0z" fill="#7a0a0a"/></svg><div style="left:431px;top:359px;width:29px;height:29px;background:#fbbdb8"></div><svg style="left:453.4px;top:381.4px" width="6.6" height="6.6" viewBox="0 0 7 7"><path d="M7 0 V7 H0z" fill="#7a0a0a"/></svg><div style="left:491px;top:359px;width:29px;height:29px;background:#f5efb8"></div><svg style="left:513.4px;top:381.4px" width="6.6" height="6.6" viewBox="0 0 7 7"><path d="M7 0 V7 H0z" fill="#7a0a0a"/></svg><span class="t" style="left:501.80px;top:366.84px;font:normal 11px/13px 'Liberation Sans',sans-serif;color:#000;">7</span><div style="left:551px;top:359px;width:29px;height:29px;background:#6fbbe0"></div><svg style="left:573.4px;top:381.4px" width="6.6" height="6.6" viewBox="0 0 7 7"><path d="M7 0 V7 H0z" fill="#7a0a0a"/></svg><div style="left:311px;top:389px;width:29px;height:42px;background:#57d68d"></div><svg style="left:333.4px;top:424.4px" width="6.6" height="6.6" viewBox="0 0 7 7"><path d="M7 0 V7 H0z" fill="#7a0a0a"/></svg><span class="t" style="left:321.80px;top:403.34px;font:normal 11px/13px 'Liberation Sans',sans-serif;color:#000;">8</span><div style="left:371px;top:389px;width:29px;height:42px;background:#57d68d"></div><svg style="left:393.4px;top:424.4px" width="6.6" height="6.6" viewBox="0 0 7 7"><path d="M7 0 V7 H0z" fill="#7a0a0a"/></svg><span class="t" style="left:381.80px;top:403.34px;font:normal 11px/13px 'Liberation Sans',sans-serif;color:#000;">8</span><div style="left:431px;top:389px;width:29px;height:42px;background:#57d68d"></div><svg style="left:453.4px;top:424.4px" width="6.6" height="6.6" viewBox="0 0 7 7"><path d="M7 0 V7 H0z" fill="#7a0a0a"/></svg><span class="t" style="left:441.80px;top:403.34px;font:normal 11px/13px 'Liberation Sans',sans-serif;color:#000;">8</span><div style="left:491px;top:389px;width:29px;height:42px;background:#57d68d"></div><svg style="left:513.4px;top:424.4px" width="6.6" height="6.6" viewBox="0 0 7 7"><path d="M7 0 V7 H0z" fill="#7a0a0a"/></svg><span class="t" style="left:501.80px;top:403.34px;font:normal 11px/13px 'Liberation Sans',sans-serif;color:#000;">8</span><div style="left:551px;top:389px;width:29px;height:42px;background:#57d68d"></div><svg style="left:573.4px;top:424.4px" width="6.6" height="6.6" viewBox="0 0 7 7"><path d="M7 0 V7 H0z" fill="#7a0a0a"/></svg><span class="t" style="left:561.80px;top:403.34px;font:normal 11px/13px 'Liberation Sans',sans-serif;color:#000;">8</span><div style="left:611px;top:329px;width:29px;height:29px;background:#fff;border:1px solid #c0286e;box-shadow:inset 0 0 0 0.4px #c0286e"></div><div style="left:611px;top:359px;width:29px;height:29px;background:#fff;border:1px solid #c0286e;box-shadow:inset 0 0 0 0.4px #c0286e"></div><div style="left:611px;top:389px;width:29px;height:42px;background:#fff;border:1px solid #c0286e;box-shadow:inset 0 0 0 0.4px #c0286e"></div><div style="left:641px;top:329px;width:29px;height:29px;background:#fff;border:1px solid #c0286e;box-shadow:inset 0 0 0 0.4px #c0286e"></div><div style="left:641px;top:359px;width:29px;height:29px;background:#fff;border:1px solid #c0286e;box-shadow:inset 0 0 0 0.4px #c0286e"></div><div style="left:641px;top:389px;width:29px;height:42px;background:#fff;border:1px solid #c0286e;box-shadow:inset 0 0 0 0.4px #c0286e"></div><div style="left:671px;top:329px;width:29px;height:29px;background:#fff;border:1px solid #c0286e;box-shadow:inset 0 0 0 0.4px #c0286e"></div><div style="left:671px;top:359px;width:29px;height:29px;background:#fff;border:1px solid #c0286e;box-shadow:inset 0 0 0 0.4px #c0286e"></div><div style="left:671px;top:389px;width:29px;height:42px;background:#fff;border:1px solid #c0286e;box-shadow:inset 0 0 0 0.4px #c0286e"></div><div style="left:701px;top:329px;width:29px;height:29px;background:#fff;border:1px solid #c0286e;box-shadow:inset 0 0 0 0.4px #c0286e"></div><div style="left:701px;top:359px;width:29px;height:29px;background:#fff;border:1px solid #c0286e;box-shadow:inset 0 0 0 0.4px #c0286e"></div><div style="left:701px;top:389px;width:29px;height:42px;background:#fff;border:1px solid #c0286e;box-shadow:inset 0 0 0 0.4px #c0286e"></div><div style="left:1031px;top:329px;width:29px;height:29px;background:#fff;border:1px solid #c0286e;box-shadow:inset 0 0 0 0.4px #c0286e"></div><div style="left:1031px;top:359px;width:29px;height:29px;background:#fff;border:1px solid #c0286e;box-shadow:inset 0 0 0 0.4px #c0286e"></div><div style="left:1031px;top:389px;width:29px;height:42px;background:#fff;border:1px solid #c0286e;box-shadow:inset 0 0 0 0.4px #c0286e"></div><div style="left:1061px;top:329px;width:29px;height:29px;background:#fff;border:1px solid #c0286e;box-shadow:inset 0 0 0 0.4px #c0286e"></div><div style="left:1061px;top:359px;width:29px;height:29px;background:#fff;border:1px solid #c0286e;box-shadow:inset 0 0 0 0.4px #c0286e"></div><div style="left:1061px;top:389px;width:29px;height:42px;background:#fff;border:1px solid #c0286e;box-shadow:inset 0 0 0 0.4px #c0286e"></div><div style="left:1091px;top:329px;width:29px;height:29px;background:#fff;border:1px solid #c0286e;box-shadow:inset 0 0 0 0.4px #c0286e"></div><div style="left:1091px;top:359px;width:29px;height:29px;background:#fff;border:1px solid #c0286e;box-shadow:inset 0 0 0 0.4px #c0286e"></div><div style="left:1091px;top:389px;width:29px;height:42px;background:#fff;border:1px solid #c0286e;box-shadow:inset 0 0 0 0.4px #c0286e"></div><div style="left:1121px;top:329px;width:29px;height:29px;background:#fff;border:1px solid #c0286e;box-shadow:inset 0 0 0 0.4px #c0286e"></div><div style="left:1121px;top:359px;width:29px;height:29px;background:#fff;border:1px solid #c0286e;box-shadow:inset 0 0 0 0.4px #c0286e"></div><div style="left:1121px;top:389px;width:29px;height:42px;background:#fff;border:1px solid #c0286e;box-shadow:inset 0 0 0 0.4px #c0286e"></div><div style="left:731px;top:329px;width:29px;height:29px;border:1px dotted #000"></div></div>
<span class="t" style="left:61.50px;top:330.84px;font:bold 11px/13px 'Liberation Sans',sans-serif;color:#000;letter-spacing:0.462px;">Несмиян Анжела</span>
<span class="t" style="left:61.50px;top:343.84px;font:bold 11px/13px 'Liberation Sans',sans-serif;color:#000;letter-spacing:0.548px;">Олеговна, создана</span>
<span class="t" style="left:210.50px;top:330.84px;font:bold 11px/13px 'Liberation Sans',sans-serif;color:#000;letter-spacing:0.489px;">Магазин 1</span>
<span class="t" style="left:61.50px;top:360.84px;font:normal 11px/13px 'Liberation Sans',sans-serif;color:#000;letter-spacing:-0.194px;">Петрова Василиса</span>
<span class="t" style="left:61.50px;top:373.84px;font:normal 11px/13px 'Liberation Sans',sans-serif;color:#000;letter-spacing:0.124px;">Альбертовна, Бухгалтер</span>
<span class="t" style="left:210.50px;top:360.84px;font:normal 11px/13px 'Liberation Sans',sans-serif;color:#000;letter-spacing:-0.068px;">Магазин 1</span>
<span class="t" style="left:61.50px;top:390.84px;font:normal 11px/13px 'Liberation Sans',sans-serif;color:#000;letter-spacing:-0.194px;">Петрова Василиса</span>
<span class="t" style="left:61.50px;top:403.84px;font:normal 11px/13px 'Liberation Sans',sans-serif;color:#000;letter-spacing:0.066px;">Альбертовна, Главный</span>
<span class="t" style="left:61.50px;top:416.84px;font:normal 11px/13px 'Liberation Sans',sans-serif;color:#000;letter-spacing:0.319px;">сотрудник</span>
<span class="t" style="left:210.50px;top:390.84px;font:normal 11px/13px 'Liberation Sans',sans-serif;color:#000;letter-spacing:-0.169px;">Склад</span>
<div style="left:28px;top:543px;width:598px;height:15px;background:#c1c1c1;border-radius:2px"></div>
<svg style="left:15px;top:545px" width="9" height="11" viewBox="0 0 9 11"><path d="M6.2 1.8 L2.6 5.5 L6.2 9.2" fill="none" stroke="#505050" stroke-width="1.5"/></svg>
<svg style="left:1175px;top:545px" width="9" height="11" viewBox="0 0 9 11"><path d="M2.8 1.8 L6.4 5.5 L2.8 9.2" fill="none" stroke="#505050" stroke-width="1.5"/></svg>
<div style="left:10px;top:573px;width:1180px;height:140px;background:#fff;border-top:1px solid #a0a0a0;border-left:1px solid #909090"></div>
<div style="left:10px;top:713px;width:1180px;height:3px;background:#bdbdbd"></div>
<div style="left:0px;top:725px;width:1199px;height:1px;background:#c9c9c9"></div>
<div style="left:0px;top:726px;width:1199px;height:1px;background:#e9e9e9"></div>
<div style="left:11px;top:574px;width:1178px;height:35px;background:#f0f0f0;border-top:1px solid #fff"></div>
<div style="left:1188px;top:574px;width:1px;height:36px;background:#a0a0a0"></div>
<div style="left:11px;top:591px;width:1178px;height:1px;background:#a0a0a0"></div>
<div style="left:11px;top:592px;width:1177px;height:1px;background:#fff"></div>
<div style="left:11px;top:609px;width:1178px;height:1px;background:#a0a0a0"></div>
<div style="left:382px;top:574px;width:1px;height:36px;background:#a0a0a0"></div>
<div style="left:383px;top:575px;width:1px;height:34px;background:#fff"></div>
<div style="left:680px;top:574px;width:1px;height:36px;background:#a0a0a0"></div>
<div style="left:681px;top:575px;width:1px;height:34px;background:#fff"></div>
<div style="left:207px;top:594px;width:1px;height:14px;background:#a0a0a0"></div>
<div style="left:208px;top:594px;width:1px;height:14px;background:#fff"></div>
<div style="left:303px;top:594px;width:1px;height:14px;background:#a0a0a0"></div>
<div style="left:304px;top:594px;width:1px;height:14px;background:#fff"></div>
<div style="left:456px;top:594px;width:1px;height:14px;background:#a0a0a0"></div>
<div style="left:457px;top:594px;width:1px;height:14px;background:#fff"></div>
<div style="left:530px;top:594px;width:1px;height:14px;background:#a0a0a0"></div>
<div style="left:531px;top:594px;width:1px;height:14px;background:#fff"></div>
<div style="left:604px;top:594px;width:1px;height:14px;background:#a0a0a0"></div>
<div style="left:605px;top:594px;width:1px;height:14px;background:#fff"></div>
<div style="left:744px;top:594px;width:1px;height:14px;background:#a0a0a0"></div>
<div style="left:745px;top:594px;width:1px;height:14px;background:#fff"></div>
<div style="left:814px;top:594px;width:1px;height:14px;background:#a0a0a0"></div>
<div style="left:815px;top:594px;width:1px;height:14px;background:#fff"></div>
<div style="left:884px;top:594px;width:1px;height:14px;background:#a0a0a0"></div>
<div style="left:885px;top:594px;width:1px;height:14px;background:#fff"></div>
<div style="left:954px;top:594px;width:1px;height:14px;background:#a0a0a0"></div>
<div style="left:955px;top:594px;width:1px;height:14px;background:#fff"></div>
<div style="left:1024px;top:594px;width:1px;height:14px;background:#a0a0a0"></div>
<div style="left:1025px;top:594px;width:1px;height:14px;background:#fff"></div>
<div style="left:1094px;top:594px;width:1px;height:14px;background:#a0a0a0"></div>
<div style="left:1095px;top:594px;width:1px;height:14px;background:#fff"></div>
<span class="t" style="left:473.90px;top:576.84px;font:bold 11px/13px 'Liberation Sans',sans-serif;color:#000;letter-spacing:0.652px;transform-origin:0 10.31px;transform:scaleY(1.13);">Планові показники</span>
<span class="t" style="left:872.50px;top:576.84px;font:bold 11px/13px 'Liberation Sans',sans-serif;color:#000;letter-spacing:0.801px;transform-origin:0 10.31px;transform:scaleY(1.13);">Фактичні показники</span>
<span class="t" style="left:76.50px;top:594.84px;font:normal 11px/13px 'Liberation Sans',sans-serif;color:#000;letter-spacing:-0.021px;transform-origin:0 10.31px;transform:scaleY(1.13);">Співробітник</span>
<span class="t" style="left:219.50px;top:594.84px;font:normal 11px/13px 'Liberation Sans',sans-serif;color:#000;letter-spacing:0.186px;transform-origin:0 10.31px;transform:scaleY(1.13);">Торгова точка</span>
<span class="t" style="left:306.50px;top:594.84px;font:normal 11px/13px 'Liberation Sans',sans-serif;color:#000;letter-spacing:0.114px;transform-origin:0 10.31px;transform:scaleY(1.13);">Позначення</span>
<span class="t" style="left:412.00px;top:594.84px;font:normal 11px/13px 'Liberation Sans',sans-serif;color:#000;letter-spacing:0.177px;transform-origin:0 10.31px;transform:scaleY(1.13);">Дні</span>
<span class="t" style="left:479.50px;top:594.84px;font:normal 11px/13px 'Liberation Sans',sans-serif;color:#000;letter-spacing:0.025px;transform-origin:0 10.31px;transform:scaleY(1.13);">Зміни</span>
<span class="t" style="left:549.50px;top:594.84px;font:normal 11px/13px 'Liberation Sans',sans-serif;color:#000;letter-spacing:0.018px;transform-origin:0 10.31px;transform:scaleY(1.13);">Години</span>
<span class="t" style="left:617.80px;top:594.84px;font:normal 11px/13px 'Liberation Sans',sans-serif;color:#000;letter-spacing:0.050px;transform-origin:0 10.31px;transform:scaleY(1.13);">Відпустка</span>
<span class="t" style="left:698.50px;top:594.84px;font:normal 11px/13px 'Liberation Sans',sans-serif;color:#000;letter-spacing:0.025px;transform-origin:0 10.31px;transform:scaleY(1.13);">Зміни</span>
<span class="t" style="left:762.00px;top:594.84px;font:normal 11px/13px 'Liberation Sans',sans-serif;color:#000;letter-spacing:0.102px;transform-origin:0 10.31px;transform:scaleY(1.13);">Години</span>
<span class="t" style="left:832.00px;top:594.84px;font:normal 11px/13px 'Liberation Sans',sans-serif;color:#000;letter-spacing:0.109px;transform-origin:0 10.31px;transform:scaleY(1.13);">Прогул</span>
<span class="t" style="left:891.50px;top:594.84px;font:normal 11px/13px 'Liberation Sans',sans-serif;color:#000;letter-spacing:0.088px;transform-origin:0 10.31px;transform:scaleY(1.13);">Запізнення</span>
<span class="t" style="left:974.10px;top:594.84px;font:normal 11px/13px 'Liberation Sans',sans-serif;color:#000;letter-spacing:-0.015px;transform-origin:0 10.31px;transform:scaleY(1.13);">Відгул</span>
<span class="t" style="left:1037.10px;top:594.84px;font:normal 11px/13px 'Liberation Sans',sans-serif;color:#000;letter-spacing:0.189px;transform-origin:0 10.31px;transform:scaleY(1.13);">Хвороба</span>
<span class="t" style="left:1108.50px;top:594.84px;font:normal 11px/13px 'Liberation Sans',sans-serif;color:#000;letter-spacing:0.013px;transform-origin:0 10.31px;transform:scaleY(1.13);">Відрядження</span>
<div style="left:383px;top:610px;width:74px;height:16px;background:#f2ef6a"></div>
<div style="left:457px;top:610px;width:74px;height:16px;background:#f7f494"></div>
<div style="left:531px;top:610px;width:74px;height:16px;background:#faf7b6"></div>
<div style="left:605px;top:610px;width:76px;height:16px;background:#fcfad0"></div>
<div style="left:681px;top:610px;width:64px;height:16px;background:#f7e9dc"></div>
<div style="left:745px;top:610px;width:70px;height:16px;background:#f5e3d0"></div>
<div style="left:815px;top:610px;width:70px;height:16px;background:#f2d9bd"></div>
<div style="left:885px;top:610px;width:70px;height:16px;background:#efd2b0"></div>
<div style="left:955px;top:610px;width:70px;height:16px;background:#ecc9a0"></div>
<div style="left:1025px;top:610px;width:70px;height:16px;background:#e9c393"></div>
<div style="left:1095px;top:610px;width:94px;height:16px;background:#e4b57c"></div>
<div style="left:383px;top:627px;width:74px;height:16px;background:#f2ef6a"></div>
<div style="left:457px;top:627px;width:74px;height:16px;background:#f7f494"></div>
<div style="left:531px;top:627px;width:74px;height:16px;background:#faf7b6"></div>
<div style="left:605px;top:627px;width:76px;height:16px;background:#fcfad0"></div>
<div style="left:681px;top:627px;width:64px;height:16px;background:#f7e9dc"></div>
<div style="left:745px;top:627px;width:70px;height:16px;background:#f5e3d0"></div>
<div style="left:815px;top:627px;width:70px;height:16px;background:#f2d9bd"></div>
<div style="left:885px;top:627px;width:70px;height:16px;background:#efd2b0"></div>
<div style="left:955px;top:627px;width:70px;height:16px;background:#ecc9a0"></div>
<div style="left:1025px;top:627px;width:70px;height:16px;background:#e9c393"></div>
<div style="left:1095px;top:627px;width:94px;height:16px;background:#e4b57c"></div>
<div style="left:11px;top:626px;width:1178px;height:1px;background:rgba(255,255,255,0.55)"></div>
<div style="left:11px;top:626px;width:372px;height:1px;background:#ececec"></div>
<div style="left:207px;top:610px;width:1px;height:50px;background:rgba(255,255,255,0.6)"></div>
<div style="left:303px;top:610px;width:1px;height:50px;background:rgba(255,255,255,0.6)"></div>
<div style="left:382px;top:610px;width:1px;height:50px;background:rgba(255,255,255,0.6)"></div>
<div style="left:456px;top:610px;width:1px;height:50px;background:rgba(255,255,255,0.6)"></div>
<div style="left:530px;top:610px;width:1px;height:50px;background:rgba(255,255,255,0.6)"></div>
<div style="left:604px;top:610px;width:1px;height:50px;background:rgba(255,255,255,0.6)"></div>
<div style="left:680px;top:610px;width:1px;height:50px;background:rgba(255,255,255,0.6)"></div>
<div style="left:744px;top:610px;width:1px;height:50px;background:rgba(255,255,255,0.6)"></div>
<div style="left:814px;top:610px;width:1px;height:50px;background:rgba(255,255,255,0.6)"></div>
<div style="left:884px;top:610px;width:1px;height:50px;background:rgba(255,255,255,0.6)"></div>
<div style="left:954px;top:610px;width:1px;height:50px;background:rgba(255,255,255,0.6)"></div>
<div style="left:1024px;top:610px;width:1px;height:50px;background:rgba(255,255,255,0.6)"></div>
<div style="left:1094px;top:610px;width:1px;height:50px;background:rgba(255,255,255,0.6)"></div>
<div style="left:207px;top:610px;width:1px;height:50px;background:#e4e4e4"></div>
<div style="left:303px;top:610px;width:1px;height:50px;background:#e4e4e4"></div>
<div style="left:382px;top:610px;width:1px;height:50px;background:#e4e4e4"></div>
<div style="left:10px;top:643px;width:1179px;height:1px;background:#000"></div>
<div style="left:10px;top:660px;width:1179px;height:1px;background:#000"></div>
<div style="left:10px;top:643px;width:1px;height:18px;background:#000"></div>
<div style="left:1188px;top:643px;width:1px;height:18px;background:#000"></div>
<span class="t" style="left:12.50px;top:611.84px;font:normal 11px/13px 'Liberation Sans',sans-serif;color:#000;letter-spacing:0.074px;transform-origin:0 10.31px;transform:scaleY(1.13);">Несмиян Анжела Олеговна, создана</span>
<span class="t" style="left:209.50px;top:611.84px;font:normal 11px/13px 'Liberation Sans',sans-serif;color:#000;letter-spacing:0.155px;transform-origin:0 10.31px;transform:scaleY(1.13);">Магазин 1</span>
<span class="t" style="left:454.50px;top:611.84px;font:normal 11px/13px 'Liberation Sans',sans-serif;color:#000;transform:translateX(-100%) scaleY(1.13);transform-origin:0 10.31px;">4 днів</span>
<span class="t" style="left:528.50px;top:611.84px;font:normal 11px/13px 'Liberation Sans',sans-serif;color:#000;transform:translateX(-100%) scaleY(1.13);transform-origin:0 10.31px;">4 змін</span>
<span class="t" style="left:602.50px;top:611.84px;font:normal 11px/13px 'Liberation Sans',sans-serif;color:#000;transform:translateX(-100%) scaleY(1.13);transform-origin:0 10.31px;">32 год</span>
<span class="t" style="left:678.50px;top:611.84px;font:normal 11px/13px 'Liberation Sans',sans-serif;color:#000;transform:translateX(-100%) scaleY(1.13);transform-origin:0 10.31px;">1 днів</span>
<span class="t" style="left:742.50px;top:611.84px;font:normal 11px/13px 'Liberation Sans',sans-serif;color:#000;transform:translateX(-100%) scaleY(1.13);transform-origin:0 10.31px;">4 змін</span>
<span class="t" style="left:812.50px;top:611.84px;font:normal 11px/13px 'Liberation Sans',sans-serif;color:#000;transform:translateX(-100%) scaleY(1.13);transform-origin:0 10.31px;">32 год</span>
<span class="t" style="left:882.50px;top:611.84px;font:normal 11px/13px 'Liberation Sans',sans-serif;color:#000;transform:translateX(-100%) scaleY(1.13);transform-origin:0 10.31px;">0 змін</span>
<span class="t" style="left:952.50px;top:611.84px;font:normal 11px/13px 'Liberation Sans',sans-serif;color:#000;transform:translateX(-100%) scaleY(1.13);transform-origin:0 10.31px;">0 змін</span>
<span class="t" style="left:1022.50px;top:611.84px;font:normal 11px/13px 'Liberation Sans',sans-serif;color:#000;transform:translateX(-100%) scaleY(1.13);transform-origin:0 10.31px;">0 змін</span>
<span class="t" style="left:1092.50px;top:611.84px;font:normal 11px/13px 'Liberation Sans',sans-serif;color:#000;transform:translateX(-100%) scaleY(1.13);transform-origin:0 10.31px;">0 змін</span>
<span class="t" style="left:1186.50px;top:611.84px;font:normal 11px/13px 'Liberation Sans',sans-serif;color:#000;transform:translateX(-100%) scaleY(1.13);transform-origin:0 10.31px;">0 днів</span>
<span class="t" style="left:12.50px;top:628.84px;font:normal 11px/13px 'Liberation Sans',sans-serif;color:#000;transform-origin:0 10.31px;transform:scaleY(1.13);">Петрова Василиса Альбертовна,</span>
<span class="t" style="left:209.50px;top:628.84px;font:normal 11px/13px 'Liberation Sans',sans-serif;color:#000;letter-spacing:0.155px;transform-origin:0 10.31px;transform:scaleY(1.13);">Магазин 1</span>
<span class="t" style="left:454.50px;top:628.84px;font:normal 11px/13px 'Liberation Sans',sans-serif;color:#000;transform:translateX(-100%) scaleY(1.13);transform-origin:0 10.31px;">3 днів</span>
<span class="t" style="left:528.50px;top:628.84px;font:normal 11px/13px 'Liberation Sans',sans-serif;color:#000;transform:translateX(-100%) scaleY(1.13);transform-origin:0 10.31px;">3 змін</span>
<span class="t" style="left:602.50px;top:628.84px;font:normal 11px/13px 'Liberation Sans',sans-serif;color:#000;transform:translateX(-100%) scaleY(1.13);transform-origin:0 10.31px;">24 год</span>
<span class="t" style="left:678.50px;top:628.84px;font:normal 11px/13px 'Liberation Sans',sans-serif;color:#000;transform:translateX(-100%) scaleY(1.13);transform-origin:0 10.31px;">2 днів</span>
<span class="t" style="left:742.50px;top:628.84px;font:normal 11px/13px 'Liberation Sans',sans-serif;color:#000;transform:translateX(-100%) scaleY(1.13);transform-origin:0 10.31px;">2 змін</span>
<span class="t" style="left:812.50px;top:628.84px;font:normal 11px/13px 'Liberation Sans',sans-serif;color:#000;transform:translateX(-100%) scaleY(1.13);transform-origin:0 10.31px;">7 год</span>
<span class="t" style="left:882.50px;top:628.84px;font:normal 11px/13px 'Liberation Sans',sans-serif;color:#000;transform:translateX(-100%) scaleY(1.13);transform-origin:0 10.31px;">1 змін</span>
<span class="t" style="left:952.50px;top:628.84px;font:normal 11px/13px 'Liberation Sans',sans-serif;color:#000;transform:translateX(-100%) scaleY(1.13);transform-origin:0 10.31px;">1 змін</span>
<span class="t" style="left:1022.50px;top:628.84px;font:normal 11px/13px 'Liberation Sans',sans-serif;color:#000;transform:translateX(-100%) scaleY(1.13);transform-origin:0 10.31px;">0 змін</span>
<span class="t" style="left:1092.50px;top:628.84px;font:normal 11px/13px 'Liberation Sans',sans-serif;color:#000;transform:translateX(-100%) scaleY(1.13);transform-origin:0 10.31px;">0 змін</span>
<span class="t" style="left:1186.50px;top:628.84px;font:normal 11px/13px 'Liberation Sans',sans-serif;color:#000;transform:translateX(-100%) scaleY(1.13);transform-origin:0 10.31px;">1 днів</span>
<span class="t" style="left:12.50px;top:645.84px;font:normal 11px/13px 'Liberation Sans',sans-serif;color:#000;transform-origin:0 10.31px;transform:scaleY(1.13);">Петрова Василиса Альбертовна,</span>
<span class="t" style="left:209.50px;top:645.84px;font:normal 11px/13px 'Liberation Sans',sans-serif;color:#000;letter-spacing:-0.169px;transform-origin:0 10.31px;transform:scaleY(1.13);">Склад</span>
<span class="t" style="left:454.50px;top:645.84px;font:normal 11px/13px 'Liberation Sans',sans-serif;color:#000;transform:translateX(-100%) scaleY(1.13);transform-origin:0 10.31px;">5 днів</span>
<span class="t" style="left:528.50px;top:645.84px;font:normal 11px/13px 'Liberation Sans',sans-serif;color:#000;transform:translateX(-100%) scaleY(1.13);transform-origin:0 10.31px;">5 змін</span>
<span class="t" style="left:602.50px;top:645.84px;font:normal 11px/13px 'Liberation Sans',sans-serif;color:#000;transform:translateX(-100%) scaleY(1.13);transform-origin:0 10.31px;">40 год</span>
<span class="t" style="left:678.50px;top:645.84px;font:normal 11px/13px 'Liberation Sans',sans-serif;color:#000;transform:translateX(-100%) scaleY(1.13);transform-origin:0 10.31px;">0 днів</span>
<span class="t" style="left:742.50px;top:645.84px;font:normal 11px/13px 'Liberation Sans',sans-serif;color:#000;transform:translateX(-100%) scaleY(1.13);transform-origin:0 10.31px;">5 змін</span>
<span class="t" style="left:812.50px;top:645.84px;font:normal 11px/13px 'Liberation Sans',sans-serif;color:#000;transform:translateX(-100%) scaleY(1.13);transform-origin:0 10.31px;">40 год</span>
<span class="t" style="left:882.50px;top:645.84px;font:normal 11px/13px 'Liberation Sans',sans-serif;color:#000;transform:translateX(-100%) scaleY(1.13);transform-origin:0 10.31px;">0 змін</span>
<span class="t" style="left:952.50px;top:645.84px;font:normal 11px/13px 'Liberation Sans',sans-serif;color:#000;transform:translateX(-100%) scaleY(1.13);transform-origin:0 10.31px;">0 змін</span>
<span class="t" style="left:1022.50px;top:645.84px;font:normal 11px/13px 'Liberation Sans',sans-serif;color:#000;transform:translateX(-100%) scaleY(1.13);transform-origin:0 10.31px;">0 змін</span>
<span class="t" style="left:1092.50px;top:645.84px;font:normal 11px/13px 'Liberation Sans',sans-serif;color:#000;transform:translateX(-100%) scaleY(1.13);transform-origin:0 10.31px;">0 змін</span>
<span class="t" style="left:1186.50px;top:645.84px;font:normal 11px/13px 'Liberation Sans',sans-serif;color:#000;transform:translateX(-100%) scaleY(1.13);transform-origin:0 10.31px;">0 днів</span>
</body></html>
